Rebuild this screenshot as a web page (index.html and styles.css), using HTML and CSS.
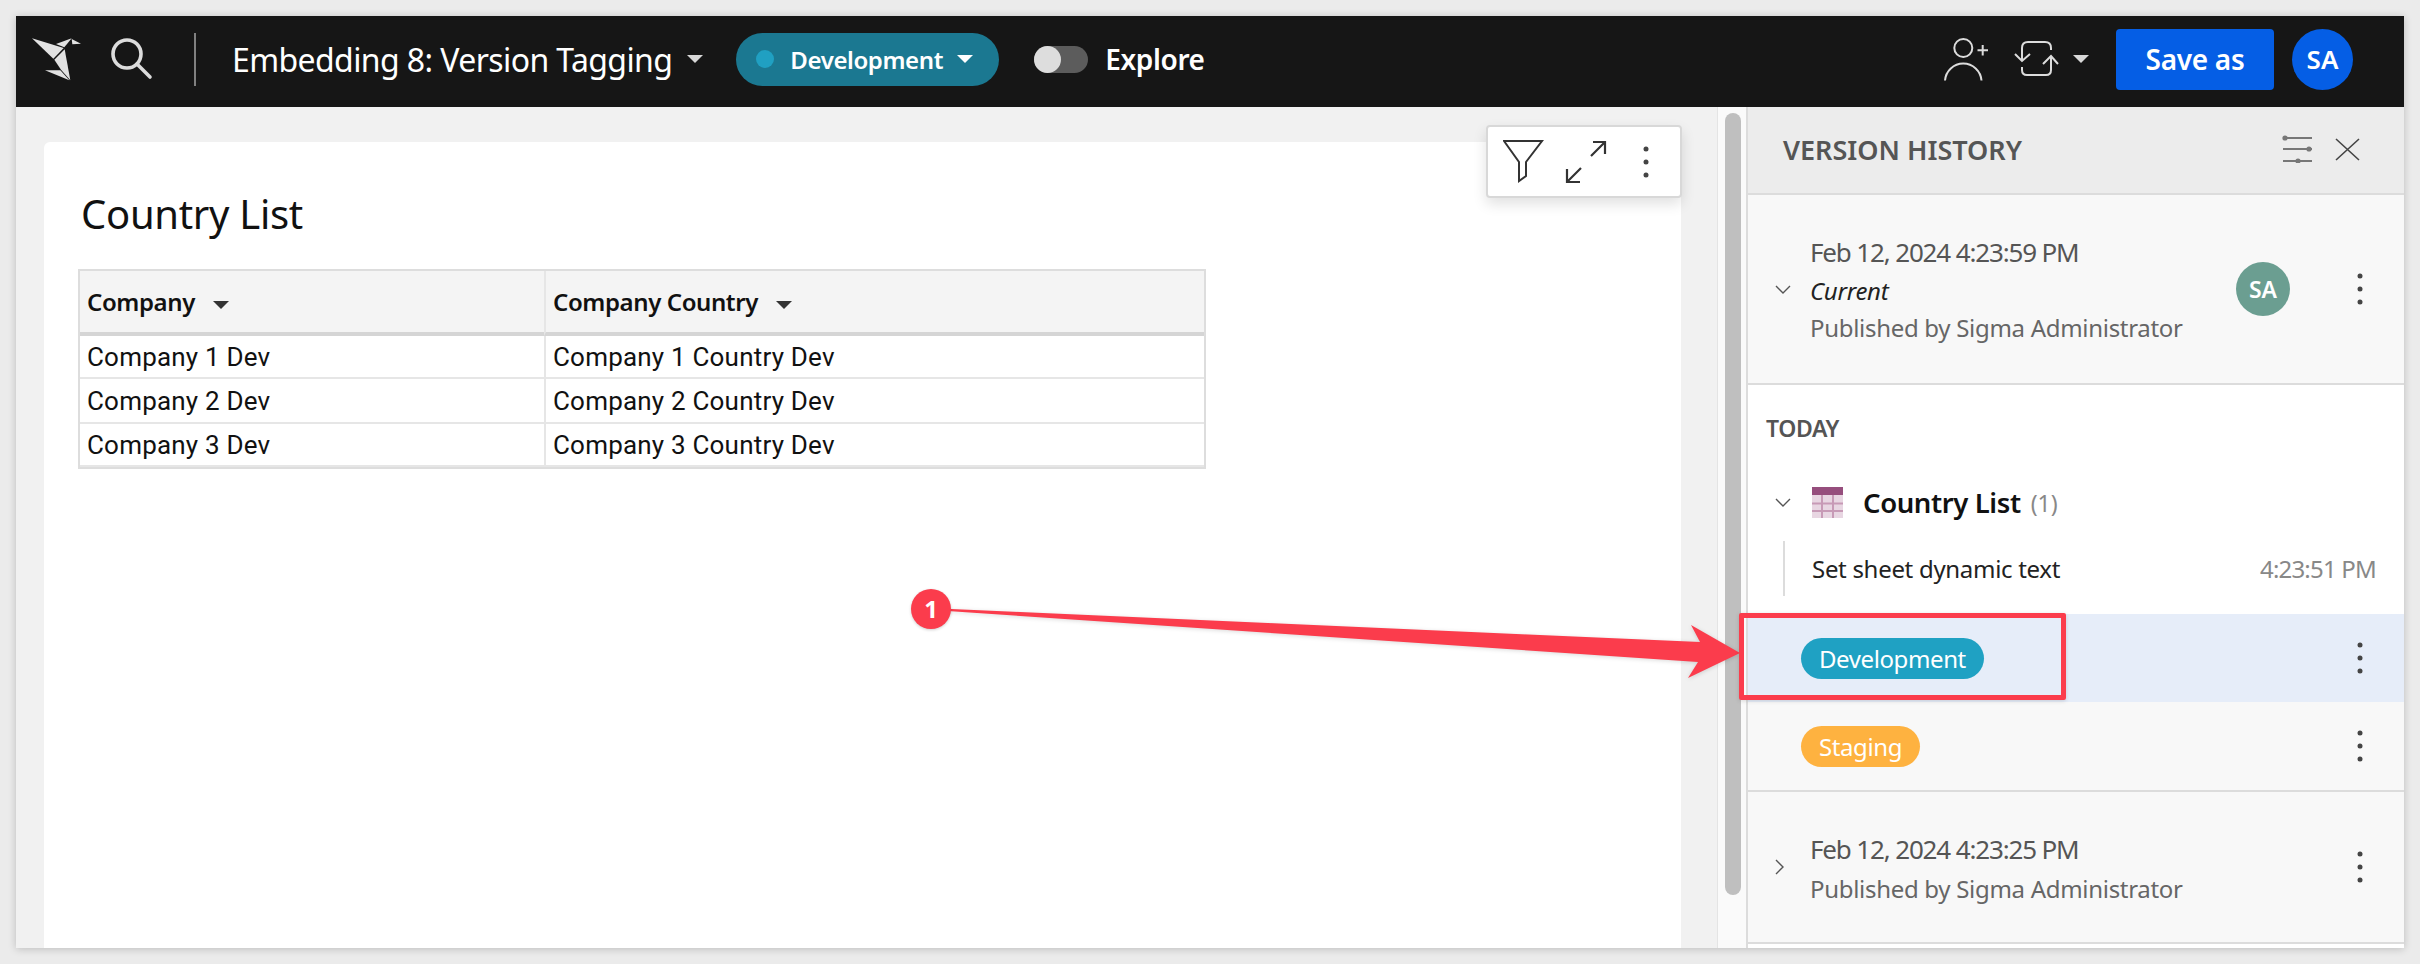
FILE: index.html

```html
<!DOCTYPE html>
<html lang="en">

<head>
    <meta charset="UTF-8">
    <title>Embedding 8: Version Tagging</title>
    <link rel="stylesheet" href="styles.css">
</head>

<body>
    <div class="window">
        <header class="topbar">
            <svg class="logo" viewBox="90 110 150 132">
                <polygon points="93,114 188,143 157,175" fill="#e2e2e2"/>
                <polygon points="165,131 212,114 190,141" fill="#e2e2e2"/>
                <polygon points="212,116 240,130 214,132" fill="#e2e2e2"/>
                <polygon points="160,178 191,147 208,240 180,208" fill="#e2e2e2"/>
                <polygon points="132,210 178,210 205,240" fill="#e2e2e2"/>
            </svg>
            <svg class="search" viewBox="0 0 42 42" fill="none" stroke="#dcdcdc" stroke-width="3.6" stroke-linecap="round">
                <circle cx="16" cy="16" r="14"/>
                <line x1="26" y1="26" x2="39" y2="39"/>
            </svg>
            <span class="divider"></span>
            <span class="doc-title">Embedding 8: Version Tagging</span>
            <span class="caret caret-title"></span>
            <div class="env-pill">
                <span class="env-dot"></span>
                <span class="env-name">Development</span>
                <span class="caret caret-white"></span>
            </div>
            <span class="toggle"><span class="toggle-knob"></span></span>
            <span class="explore">Explore</span>
            <div class="topbar-right">
                <svg class="user-add" viewBox="0 0 45 43" fill="none" stroke="#dcdcdc" stroke-width="2">
                    <circle cx="19.3" cy="10" r="9"/>
                    <path d="M1 42.5 A18.3 18.3 0 0 1 37.5 42.5"/>
                    <path d="M33.5 12.3 H44 M38.7 7 V17.5"/>
                </svg>
                <svg class="sync" viewBox="0 0 45 36" fill="none" stroke="#dcdcdc" stroke-width="2">
                    <path d="M8 20 V7 Q8 1 14 1 H31 Q37 1 37 7 V9"/>
                    <path d="M1 13 L8 20 L16 13"/>
                    <path d="M37 15 V29 Q37 34 32 34 H13 Q8 34 8 29 V26"/>
                    <path d="M29 23 L37 15 L44 23"/>
                </svg>
                <span class="caret caret-sync"></span>
                <button class="save-btn">Save as</button>
                <span class="avatar avatar-blue">SA</span>
            </div>
        </header>

        <div class="content">
            <main class="main">
                <div class="tile-menu">
                    <svg class="funnel" viewBox="0 0 41 44" fill="none" stroke="#333" stroke-width="2">
                        <path d="M1 1 H39 L23 22 V36 L16 41 V22 Z"/>
                    </svg>
                    <svg class="expand" viewBox="0 0 42 42" fill="none" stroke="#333" stroke-width="2.2">
                        <path d="M26 15 L40 1 M28 1 H40 V13"/>
                        <path d="M16 27 L2 41 M2 28 V41 H15"/>
                    </svg>
                    <svg class="kebab" viewBox="0 0 6 32"><circle cx="3" cy="3" r="2.5"/><circle cx="3" cy="16" r="2.5"/><circle cx="3" cy="29" r="2.5"/></svg>
                </div>
                <section class="card">
                    <h1 class="card-title">Country List</h1>
                    <table class="grid">
                        <thead>
                            <tr>
                                <th class="col-company">Company<span class="caret caret-dark"></span></th>
                                <th>Company Country<span class="caret caret-dark"></span></th>
                            </tr>
                        </thead>
                        <tbody>
                            <tr class="row-1">
                                <td>Company 1 Dev</td>
                                <td>Company 1 Country Dev</td>
                            </tr>
                            <tr class="row-2">
                                <td>Company 2 Dev</td>
                                <td>Company 2 Country Dev</td>
                            </tr>
                            <tr class="row-3">
                                <td>Company 3 Dev</td>
                                <td>Company 3 Country Dev</td>
                            </tr>
                        </tbody>
                    </table>
                </section>
            </main>

            <div class="scroll-track"><div class="scroll-thumb"></div></div>

            <aside class="panel">
                <div class="panel-head">
                    <span class="panel-title">VERSION HISTORY</span>
                    <svg class="sliders" viewBox="0 0 30 28" fill="none" stroke="#777" stroke-width="2">
                        <path d="M1 3 H30 M1 14 H30 M1 26 H30"/>
                        <circle cx="3" cy="3" r="2.6" fill="#777" stroke="none"/>
                        <circle cx="27" cy="14" r="2.6" fill="#777" stroke="none"/>
                        <circle cx="16" cy="26" r="2.6" fill="#777" stroke="none"/>
                    </svg>
                    <svg class="close" viewBox="0 0 25 23" fill="none" stroke="#444" stroke-width="1.6">
                        <path d="M1 1 L24 22 M24 1 L1 22"/>
                    </svg>
                </div>

                <div class="version version-current">
                    <svg class="chev-down" viewBox="0 0 16 9" fill="none" stroke="#555" stroke-width="1.4"><path d="M1 1 L8 8 L15 1"/></svg>
                    <div class="version-text">
                        <div class="version-date">Feb 12, 2024 4:23:59 PM</div>
                        <div class="version-note">Current</div>
                        <div class="version-by">Published by Sigma Administrator</div>
                    </div>
                    <span class="avatar avatar-green">SA</span>
                    <svg class="kebab" viewBox="0 0 6 32"><circle cx="3" cy="3" r="2.5"/><circle cx="3" cy="16" r="2.5"/><circle cx="3" cy="29" r="2.5"/></svg>
                </div>

                <div class="today">
                    <div class="today-label">TODAY</div>
                    <div class="sheet-row">
                        <svg class="chev-down" viewBox="0 0 16 9" fill="none" stroke="#555" stroke-width="1.4"><path d="M1 1 L8 8 L15 1"/></svg>
                        <svg class="table-icon" viewBox="0 0 31 31">
                            <rect width="31" height="31" fill="#e8d6e2"/>
                            <rect width="31" height="8" fill="#964e7d"/>
                            <path d="M10 8 V31 M21 8 V31 M0 16.5 H31 M0 24 H31" stroke="#c79ab6" stroke-width="2"/>
                        </svg>
                        <span class="sheet-name">Country List</span>
                        <span class="sheet-count">(1)</span>
                    </div>
                    <div class="change-row">
                        <span class="change-name">Set sheet dynamic text</span>
                        <span class="change-time">4:23:51 PM</span>
                    </div>
                </div>

                <div class="tag-row tag-row-active">
                    <span class="tag tag-dev">Development</span>
                    <svg class="kebab" viewBox="0 0 6 32"><circle cx="3" cy="3" r="2.5"/><circle cx="3" cy="16" r="2.5"/><circle cx="3" cy="29" r="2.5"/></svg>
                </div>
                <div class="tag-row">
                    <span class="tag tag-staging">Staging</span>
                    <svg class="kebab" viewBox="0 0 6 32"><circle cx="3" cy="3" r="2.5"/><circle cx="3" cy="16" r="2.5"/><circle cx="3" cy="29" r="2.5"/></svg>
                </div>

                <div class="version version-old">
                    <svg class="chev-right" viewBox="0 0 9 16" fill="none" stroke="#555" stroke-width="1.4"><path d="M1 1 L8 8 L1 15"/></svg>
                    <div class="version-text">
                        <div class="version-date">Feb 12, 2024 4:23:25 PM</div>
                        <div class="version-by">Published by Sigma Administrator</div>
                    </div>
                    <svg class="kebab" viewBox="0 0 6 32"><circle cx="3" cy="3" r="2.5"/><circle cx="3" cy="16" r="2.5"/><circle cx="3" cy="29" r="2.5"/></svg>
                </div>
            </aside>
        </div>
    </div>

    <!-- annotation drawn over the screenshot -->
    <svg class="arrow" viewBox="0 0 2420 964">
        <polygon points="940,608.5 1700,642 1691,625 1740,653 1688,678 1698,662 940,610.5" fill="#fb3c4c"/>
    </svg>
    <div class="badge">1</div>
    <div class="callout"></div>
</body>

</html>
```

FILE: styles.css

```css
* {
    box-sizing: border-box;
}

html,
body {
    height: 964px;
    overflow: hidden;
}

body {
    margin: 0;
    padding: 16px;
    position: relative;
    background-color: #ebebeb;
    font-family: "Noto Sans", sans-serif;
}

.window {
    width: 2388px;
    height: 932px;
    display: flex;
    flex-direction: column;
    overflow: hidden;
    box-shadow: 0 1px 8px rgba(0, 0, 0, 0.2);
}

/* top bar */
.topbar {
    height: 91px;
    flex: none;
    display: flex;
    align-items: center;
    padding-left: 15px;
    padding-bottom: 5px;
    background-color: #161616;
    color: #fff;
}

.logo {
    width: 50px;
    height: 44px;
}

.search {
    width: 42px;
    height: 42px;
    margin-left: 30px;
}

.divider {
    width: 2px;
    height: 53px;
    margin-left: 41px;
    background-color: #808080;
}

.doc-title {
    margin-left: 36px;
    font-size: 32px;
    letter-spacing: -0.6px;
    white-space: nowrap;
}

.caret {
    display: inline-block;
    width: 0;
    height: 0;
    border-left: 8px solid transparent;
    border-right: 8px solid transparent;
    border-top: 8px solid #d8d8d8;
}

.caret-title {
    margin-left: 15px;
}

.caret-white {
    border-top-color: #fff;
    margin-left: 14px;
}

.env-pill {
    width: 263px;
    height: 53px;
    margin-left: 33px;
    display: flex;
    align-items: center;
    padding-left: 20px;
    border-radius: 27px;
    background-color: #1b7891;
}

.env-dot {
    width: 18px;
    height: 18px;
    border-radius: 50%;
    background-color: #20a0c2;
}

.env-name {
    margin-left: 16px;
    font-size: 24px;
    font-weight: 600;
    letter-spacing: -0.4px;
}

.toggle {
    width: 54px;
    height: 27px;
    margin-left: 35px;
    border-radius: 14px;
    background-color: #5c5c5c;
}

.toggle-knob {
    display: block;
    width: 27px;
    height: 27px;
    border-radius: 50%;
    background-color: #ddd;
}

.explore {
    margin-left: 17px;
    font-size: 28px;
    font-weight: 600;
    letter-spacing: -0.4px;
}

.topbar-right {
    margin-left: auto;
    display: flex;
    align-items: center;
    padding-right: 51px;
}

.user-add {
    width: 45px;
    height: 43px;
}

.sync {
    width: 45px;
    height: 36px;
    margin-left: 25px;
}

.caret-sync {
    margin-left: 14px;
}

.save-btn {
    width: 158px;
    height: 61px;
    margin-left: 27px;
    border: none;
    border-radius: 4px;
    background-color: #055ee5;
    color: #fff;
    font-family: inherit;
    font-size: 28px;
    font-weight: 600;
    letter-spacing: -0.3px;
}

.avatar {
    display: flex;
    align-items: center;
    justify-content: center;
    border-radius: 50%;
    color: #fff;
    font-weight: 600;
}

.avatar-blue {
    width: 61px;
    height: 61px;
    margin-left: 18px;
    background-color: #055ee5;
    font-size: 26px;
}

/* worksheet area */
.content {
    flex: 1;
    display: flex;
    min-height: 0;
}

.main {
    width: 1701px;
    position: relative;
    padding: 35px 36px 0 28px;
    background-color: #f1f1f1;
}

.card {
    height: 100%;
    padding: 46px 0 0 34px;
    border-radius: 6px 6px 0 0;
    background-color: #fff;
}

.card-title {
    height: 52px;
    margin: 0 0 29px 3px;
    font-size: 40px;
    font-weight: 400;
    line-height: 52px;
    letter-spacing: -0.3px;
    color: #111;
}

.tile-menu {
    position: absolute;
    left: 1470px;
    top: 18px;
    width: 196px;
    height: 73px;
    display: flex;
    align-items: center;
    padding-left: 15px;
    border: 2px solid #d8d8d8;
    border-radius: 4px;
    background-color: #fff;
    box-shadow: 0 6px 14px rgba(0, 0, 0, 0.12);
}

.funnel {
    width: 41px;
    height: 44px;
}

.expand {
    width: 42px;
    height: 42px;
    margin-left: 21px;
}

.tile-menu .kebab {
    margin-left: 36px;
}

.kebab {
    width: 6px;
    height: 32px;
    flex: none;
    fill: #444;
}

/* table */
.grid {
    width: 1128px;
    table-layout: fixed;
    border-spacing: 0;
    border: 2px solid #ddd;
    color: #111;
}

.col-company {
    width: 464px;
}

.grid th {
    height: 65px;
    padding: 0 0 0 7px;
    text-align: left;
    font-size: 24px;
    font-weight: 600;
    letter-spacing: -0.4px;
    background-color: #f4f4f4;
    border-bottom: 4px solid #d5d5d5;
    border-left: 2px solid #e6e6e6;
}

.grid th:first-child,
.grid td:first-child {
    border-left: none;
}

.grid td {
    padding: 0 0 0 7px;
    font-family: Roboto, sans-serif;
    font-size: 26px;
    letter-spacing: 0.2px;
    border-bottom: 2px solid #e6e6e6;
    border-left: 2px solid #e6e6e6;
}

.row-1 td {
    height: 43px;
}

.row-2 td {
    height: 45px;
}

.row-3 td {
    height: 43px;
}

.caret-dark {
    border-top-color: #333;
    margin-left: 18px;
    vertical-align: middle;
}

/* scrollbar between sheet and panel */
.scroll-track {
    width: 29px;
    flex: none;
    padding: 6px 6px 0 7px;
    background-color: #fafafa;
    border-left: 1px solid #e4e4e4;
}

.scroll-thumb {
    width: 16px;
    height: 782px;
    border-radius: 8px;
    background-color: #bfbfbf;
}

/* version history panel */
.panel {
    flex: 1;
    display: flex;
    flex-direction: column;
    border-left: 2px solid #dcdcdc;
    background-color: #fff;
}

.panel-head {
    height: 88px;
    flex: none;
    display: flex;
    align-items: center;
    padding: 0 44px 2px 35px;
    border-bottom: 2px solid #dcdcdc;
    background-color: #ececec;
}

.panel-title {
    font-size: 27px;
    font-weight: 600;
    color: #555;
}

.sliders {
    width: 30px;
    height: 28px;
    margin-left: auto;
}

.close {
    width: 25px;
    height: 23px;
    margin-left: 23px;
}

.version {
    flex: none;
    display: flex;
    align-items: center;
    padding: 0 41px 0 27px;
    border-bottom: 2px solid #dcdcdc;
    background-color: #f8f8f8;
}

.version-current {
    height: 190px;
}

.version-old {
    height: 154px;
}

.chev-down {
    width: 16px;
    height: 9px;
    flex: none;
}

.chev-right {
    width: 9px;
    height: 16px;
    flex: none;
    margin-right: 7px;
}

.version-text {
    margin-left: 19px;
    flex: 1;
}

.version-date {
    height: 40px;
    font-size: 26px;
    line-height: 40px;
    letter-spacing: -1.15px;
    color: #555;
}

.version-note {
    height: 38px;
    font-size: 24px;
    font-style: italic;
    line-height: 38px;
    letter-spacing: -0.3px;
    color: #222;
}

.version-by {
    height: 36px;
    font-size: 24px;
    line-height: 36px;
    letter-spacing: -0.3px;
    color: #666;
}

.version-old .version-text {
    padding-top: 2px;
}

.version-old .version-by {
    margin-top: 2px;
}

.avatar-green {
    width: 54px;
    height: 54px;
    margin-right: 67px;
    background-color: #6b9e91;
    font-size: 23px;
}

.today {
    height: 229px;
    flex: none;
}

.today-label {
    padding: 25px 0 0 18px;
    font-size: 23px;
    font-weight: 600;
    line-height: 36px;
    letter-spacing: -0.4px;
    color: #555;
}

.sheet-row {
    height: 31px;
    margin-top: 41px;
    display: flex;
    align-items: center;
    padding-left: 27px;
}

.table-icon {
    width: 31px;
    height: 31px;
    margin-left: 21px;
}

.sheet-name {
    margin-left: 20px;
    font-size: 27.5px;
    font-weight: 600;
    letter-spacing: -0.4px;
    color: #111;
}

.sheet-count {
    margin-left: 10px;
    font-size: 23px;
    color: #888;
}

.change-row {
    height: 55px;
    margin: 23px 28px 0 35px;
    display: flex;
    align-items: center;
    justify-content: space-between;
    padding-left: 27px;
    border-left: 2px solid #dcdcdc;
}

.change-name {
    font-size: 24px;
    letter-spacing: -0.3px;
    color: #222;
}

.change-time {
    font-size: 24px;
    letter-spacing: -0.8px;
    color: #888;
}

.tag-row {
    height: 88px;
    flex: none;
    display: flex;
    align-items: center;
    justify-content: space-between;
    padding: 0 41px 0 53px;
    background-color: #f8f8f8;
}

.tag-row-active {
    background-color: #e6edf9;
}

.tag {
    height: 41px;
    display: flex;
    align-items: center;
    padding: 0 18px;
    border-radius: 21px;
    color: #fff;
    font-size: 24px;
    letter-spacing: -0.4px;
}

.tag-dev {
    background-color: #1fa1c3;
}

.tag-staging {
    background-color: #feb240;
}

.tag-row + .version {
    border-top: 2px solid #dcdcdc;
}

/* annotation layer */
.arrow {
    position: absolute;
    left: 0;
    top: 0;
    width: 2420px;
    height: 964px;
    filter: drop-shadow(0 1px 2px rgba(0, 0, 0, 0.15));
}

.badge {
    position: absolute;
    left: 911px;
    top: 589px;
    width: 40px;
    height: 40px;
    border-radius: 50%;
    background-color: #fb3c4c;
    color: #fff;
    font-family: "Open Sans", sans-serif;
    font-size: 24px;
    font-weight: 700;
    line-height: 40px;
    text-align: center;
    box-shadow: 0 1px 3px rgba(0, 0, 0, 0.2);
}

.callout {
    position: absolute;
    left: 1739px;
    top: 613px;
    width: 327px;
    height: 87px;
    border: 5px solid #fb3c4c;
    border-radius: 2px;
    box-shadow: 0 1px 4px rgba(0, 0, 0, 0.15);
}
```
